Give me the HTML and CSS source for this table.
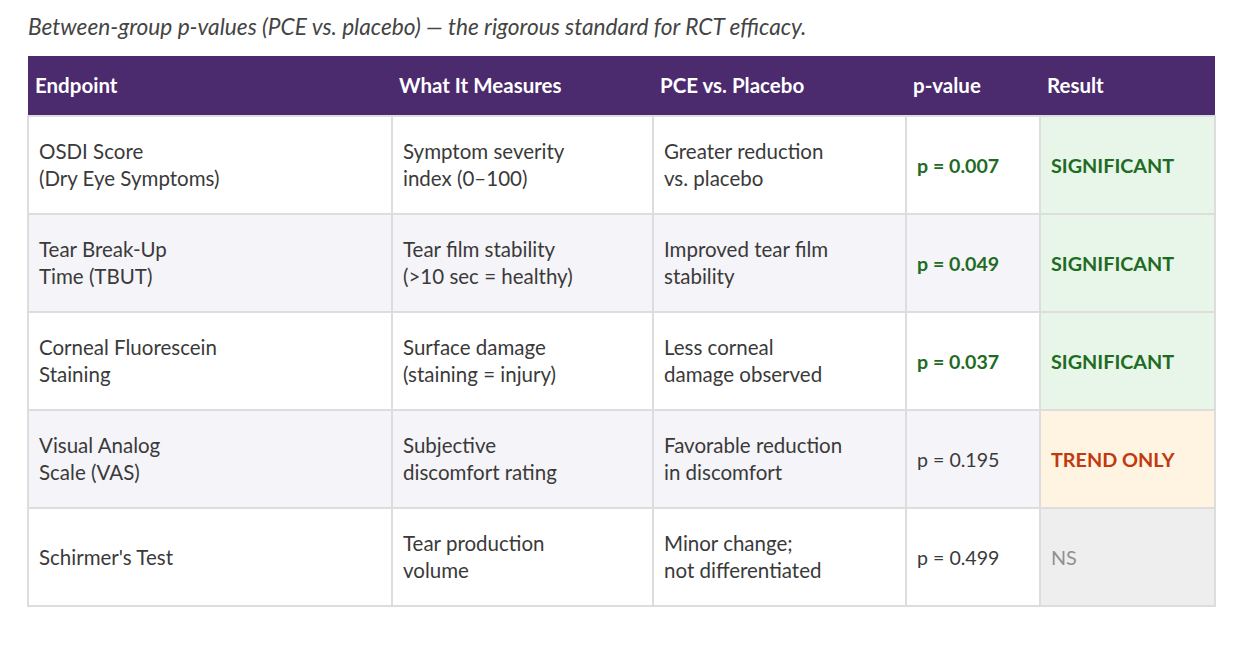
FILE: index.html
```html
<!DOCTYPE html>
<html>
<head>
<meta charset="utf-8">
<link rel="stylesheet" href="styles.css">
</head>
<body>
<div class="page">
  <p class="caption">Between-group p-values (PCE vs. placebo) — the rigorous standard for RCT efficacy.</p>
  <table class="results">
    <colgroup>
      <col class="c1"><col class="c2"><col class="c3"><col class="c4"><col class="c5">
    </colgroup>
    <thead>
      <tr><th>Endpoint</th><th>What It Measures</th><th>PCE vs. Placebo</th><th>p-value</th><th>Result</th></tr>
    </thead>
    <tbody>
      <tr>
        <td>OSDI Score<br>(Dry Eye Symptoms)</td>
        <td>Symptom severity<br>index (0–100)</td>
        <td>Greater reduction<br>vs. placebo</td>
        <td class="p sig">p = 0.007</td>
        <td class="res res-sig">SIGNIFICANT</td>
      </tr>
      <tr class="alt">
        <td>Tear Break-Up<br>Time (TBUT)</td>
        <td>Tear film stability<br>(&gt;10 sec = healthy)</td>
        <td>Improved tear film<br>stability</td>
        <td class="p sig">p = 0.049</td>
        <td class="res res-sig">SIGNIFICANT</td>
      </tr>
      <tr>
        <td>Corneal Fluorescein<br>Staining</td>
        <td>Surface damage<br>(staining = injury)</td>
        <td>Less corneal<br>damage observed</td>
        <td class="p sig">p = 0.037</td>
        <td class="res res-sig">SIGNIFICANT</td>
      </tr>
      <tr class="alt">
        <td>Visual Analog<br>Scale (VAS)</td>
        <td>Subjective<br>discomfort rating</td>
        <td>Favorable reduction<br>in discomfort</td>
        <td class="p">p = 0.195</td>
        <td class="res res-trend">TREND ONLY</td>
      </tr>
      <tr>
        <td>Schirmer's Test</td>
        <td>Tear production<br>volume</td>
        <td>Minor change;<br>not differentiated</td>
        <td class="p">p = 0.499</td>
        <td class="res res-ns">NS</td>
      </tr>
    </tbody>
  </table>
</div>
</body>
</html>
```
FILE: styles.css
```css
html, body {
  margin: 0;
  padding: 0;
  background: #ffffff;
}
.page {
  padding: 13px 26px 0 27px;
  font-family: Lato, "Open Sans", sans-serif;
  color: #3a3a3a;
}
.caption {
  margin: 0 0 16px 1px;
  font-style: italic;
  font-size: 22.7px;
  line-height: 27px;
  color: #444444;
}
.results {
  width: 1187px;
  border-collapse: collapse;
  table-layout: fixed;
  font-size: 20.5px;
  line-height: 27px;
}
.c1 { width: 364px; }
.c2 { width: 261px; }
.c3 { width: 253px; }
.c4 { width: 134px; }
.c5 { width: 175px; }
.results th {
  background: #4b2a6e;
  color: #ffffff;
  font-weight: 700;
  text-align: left;
  height: 59px;
  padding: 0 7px;
  font-size: 20.5px;
}
.results td {
  border: 2px solid #dddddd;
  height: 96px;
  padding: 0 10px;
  vertical-align: middle;
  color: #3a3a3a;
}
.results tr.alt td { background: #f5f4f8; }
.results td.p {
  font-size: 19.6px;
}
.results td.p.sig {
  color: #1e6b24;
  font-weight: 700;
}
.results td.res {
  font-size: 19.8px;
  font-weight: 700;
}
.results td.res-sig,
.results tr.alt td.res-sig {
  background: #e8f5e9;
  color: #1e6b24;
}
.results td.res-trend,
.results tr.alt td.res-trend {
  background: #fff3e1;
  color: #c0390f;
}
.results td.res-ns {
  background: #eeeeee;
  color: #909090;
  font-weight: 400;
}
```
